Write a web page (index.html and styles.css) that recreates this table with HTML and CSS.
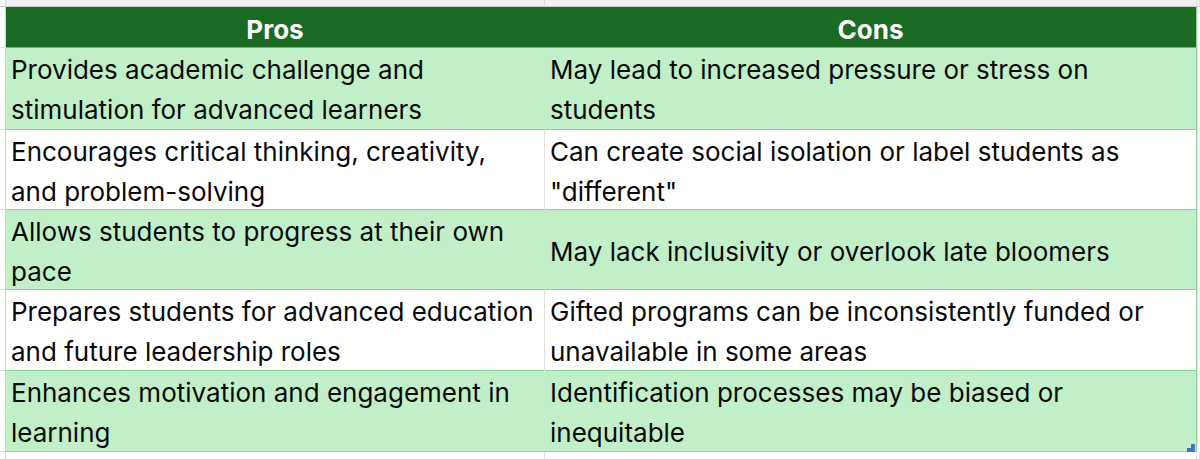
FILE: index.html
```html
<!DOCTYPE html>
<html lang="en">
<head>
<meta charset="utf-8">
<title>Pros and Cons</title>
<link rel="stylesheet" href="styles.css">
</head>
<body>
<div class="sheet">
  <div class="top-strip">
    <div class="gutter"></div>
    <div class="tc c1"></div>
    <div class="tc c2"></div>
    <div class="tc c3"></div>
  </div>
  <div class="main">
    <div class="gutter-col">
      <div class="g-cell head"></div>
      <div class="g-cell r1"></div>
      <div class="g-cell r2"></div>
      <div class="g-cell r3"></div>
      <div class="g-cell r4"></div>
      <div class="g-cell r5"></div>
    </div>
    <div class="table">
      <div class="row head">
        <div class="cell">Pros</div>
        <div class="cell">Cons</div>
      </div>
      <div class="row green r1">
        <div class="cell">Provides academic challenge and<br>stimulation for advanced learners</div>
        <div class="cell">May lead to increased pressure or stress on<br>students</div>
      </div>
      <div class="row white r2">
        <div class="cell">Encourages critical thinking, creativity,<br>and problem-solving</div>
        <div class="cell">Can create social isolation or label students as<br>"different"</div>
      </div>
      <div class="row green r3">
        <div class="cell">Allows students to progress at their own<br>pace</div>
        <div class="cell">May lack inclusivity or overlook late bloomers</div>
      </div>
      <div class="row white r4">
        <div class="cell">Prepares students for advanced education<br>and future leadership roles</div>
        <div class="cell">Gifted programs can be inconsistently funded or<br>unavailable in some areas</div>
      </div>
      <div class="row green r5">
        <div class="cell">Enhances motivation and engagement in<br>learning</div>
        <div class="cell">Identification processes may be biased or<br>inequitable
          <svg class="handle" width="8" height="8" viewBox="0 0 8 8"><polygon points="4,0 8,0 8,8 0,8 0,4 4,4" fill="#4472c4"/></svg>
        </div>
      </div>
    </div>
    <div class="right-col"></div>
  </div>
  <div class="below">
    <div class="gutter"></div>
    <div class="bc c1"></div>
    <div class="bc c2"></div>
    <div class="bc c3"></div>
  </div>
</div>
</body>
</html>
```
FILE: styles.css
```css
html, body {
  margin: 0;
  padding: 0;
  background: #ffffff;
}

.sheet {
  width: 1200px;
  height: 459px;
  overflow: hidden;
  display: flex;
  flex-direction: column;
  font-family: Inter, "Liberation Sans", sans-serif;
  color: #0a0a0a;
}

/* top strip of the spreadsheet */
.top-strip {
  display: grid;
  grid-template-columns: 6px 539px 652px 1fr;
  height: 7px;
  flex: none;
}
.top-strip > div {
  background: #f1f1f1;
  border-bottom: 1px solid #c9c9c9;
  border-right: 1px solid #dcdcdc;
  box-sizing: border-box;
}
.top-strip .gutter {
  background: #ffffff;
  border-right: 1px solid #d4d4d4;
}

.main {
  display: flex;
  flex: none;
}

.gutter-col {
  width: 6px;
  flex: none;
  display: flex;
  flex-direction: column;
}
.g-cell {
  box-sizing: border-box;
  border-right: 1px solid #d4d4d4;
  border-bottom: 1px solid #dedede;
}
.g-cell.head { height: 41px; }
.g-cell.r1 { height: 82px; }
.g-cell.r2 { height: 80px; }
.g-cell.r3 { height: 80px; }
.g-cell.r4 { height: 81px; }
.g-cell.r5 { height: 81px; }

.table {
  width: 1191px;
  flex: none;
  display: flex;
  flex-direction: column;
  border-right: 1px solid #86d992;
  box-sizing: border-box;
}

.row {
  display: grid;
  grid-template-columns: 538px 1fr;
  box-sizing: border-box;
  border-bottom: 1px solid #86d992;
}

.row .cell {
  display: flex;
  align-items: center;
  padding-left: 5px;
  padding-top: 2px;
  font-size: 26px;
  line-height: 40px;
  white-space: nowrap;
  position: relative;
}
.row .cell + .cell {
  border-left: 1px solid transparent;
}

.row.head {
  height: 41px;
  background: #1c6b24;
  border-bottom-color: #55c25f;
}
.row.head .cell {
  justify-content: center;
  padding-left: 0;
  padding-top: 3px;
  color: #ffffff;
  font-weight: 700;
  font-size: 26px;
}

.row.green { background: #c1f0c8; }
.row.white { background: #ffffff; }
.row.white .cell + .cell { border-left-color: #e0e0e0; }

.r1 { height: 82px; }
.r2 { height: 80px; }
.r3 { height: 80px; }
.r4 { height: 81px; }
.r5 { height: 81px; }

.handle {
  position: absolute;
  right: 1px;
  bottom: 1px;
}

.right-col {
  flex: 1;
  border-left: 1px solid #e6e6e6;
}

.below {
  flex: 1;
  display: grid;
  grid-template-columns: 6px 539px 652px 1fr;
}
.below > div {
  border-right: 1px solid #e0e0e0;
  box-sizing: border-box;
}
.below .gutter {
  border-right-color: #d4d4d4;
}
```
